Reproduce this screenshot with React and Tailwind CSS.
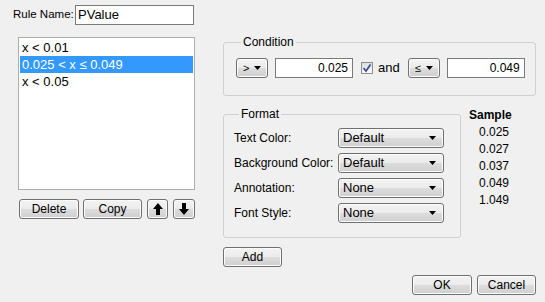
const base =
  'flex items-center h-[20px] border border-[#707070] rounded-[3px] bg-[linear-gradient(#f3f3f3_0%,#ebebeb_50%,#dddddd_50%,#cfcfcf_100%)] text-[12px] text-black shadow-[inset_0_0_0_1px_#fcfcfc] shrink-0'
const btn = `${base} justify-center`

const Caret = () => (
  <svg width="7" height="4" viewBox="0 0 7 4">
    <path d="M0 0 H7 L3.5 4 Z" fill="#000" />
  </svg>
)

const Arrow = ({ down }) => (
  <svg width="10" height="12" viewBox="0 0 10 12" style={down ? { transform: 'rotate(180deg)' } : undefined}>
    <path d="M5 0 L10 6 H7 V12 H3 V6 H0 Z" fill="#000" />
  </svg>
)

const Select = ({ value }) => (
  <div className={`${base} w-[106px] justify-between pl-[4px] pr-[7px]`}>
    <span className="text-[13px]">{value}</span>
    <Caret />
  </div>
)

const Mini = ({ value }) => (
  <div className={`${base} w-[32px] h-[17px] justify-between pl-[6px] pr-[6px]`}>
    <span className="text-[11px] leading-none">{value}</span>
    <Caret />
  </div>
)

const NumInput = ({ value }) => (
  <div className="w-[78px] h-[20px] bg-white border border-[#7a7a7a] flex items-center justify-end pr-[4px] text-[12px]">
    {value}
  </div>
)

export default function App() {
  const rules = ['x < 0.01', '0.025 < x ≤ 0.049', 'x < 0.05']
  const fmt = [
    ['Text Color:', 'Default'],
    ['Background Color:', 'Default'],
    ['Annotation:', 'None'],
    ['Font Style:', 'None'],
  ]

  return (
    <div
      className="w-[545px] h-[302px] bg-[#f0f0f0] flex text-[12px] text-black overflow-hidden"
      style={{ fontFamily: '"Liberation Sans", Arial, sans-serif' }}
    >
      {/* left column */}
      <div className="w-[223px] shrink-0 pl-[13px] pt-[5px] flex flex-col">
        <div className="flex items-center h-[20px]">
          <span className="w-[62px] shrink-0 whitespace-nowrap text-[11.5px]">Rule Name:</span>
          <div className="w-[119px] h-[20px] bg-white border border-[#7a7a7a] flex items-center pl-[2px] text-[13px]">
            PValue
          </div>
        </div>

        <div className="mt-[12px] ml-[5px] w-[177px] h-[153px] bg-white border border-[#abadb3] p-[1px]">
          {rules.map((r, i) => (
            <div
              key={i}
              className={`h-[17px] flex items-center pl-[2px] text-[13px] ${i === 1 ? 'bg-[#3399ff] text-white' : ''}`}
            >
              {r}
            </div>
          ))}
        </div>

        <div className="mt-[9px] ml-[6px] flex">
          <div className={`${btn} w-[60px]`}>Delete</div>
          <div className={`${btn} w-[59px] ml-[4px]`}>Copy</div>
          <div className={`${btn} w-[21px] ml-[5px]`}><Arrow /></div>
          <div className={`${btn} w-[22px] ml-[5px]`}><Arrow down /></div>
        </div>
      </div>

      {/* right column */}
      <div className="w-[313px] shrink-0 pt-[35px] flex flex-col">
        <fieldset className="h-[61px] border border-[#d0d0d0] rounded-[3px] pl-[12px]">
          <legend className="ml-[5px] px-[2px] leading-[14px] text-[12px]">Condition</legend>
          <div className="mt-[9px] flex items-center h-[20px]">
            <Mini value=">" />
            <div className="ml-[7px]"><NumInput value="0.025" /></div>
            <div className="ml-[8px] w-[12px] h-[12px] border border-[#8e8f8f] bg-[linear-gradient(#dcdcdc,#fafafa)] flex items-center justify-center">
              <svg width="10" height="10" viewBox="0 0 10 10">
                <path d="M1.5 5 L4 8 L8.5 1.5" fill="none" stroke="#3b4f8f" strokeWidth="1.7" />
              </svg>
            </div>
            <span className="ml-[5px] text-[13px]">and</span>
            <div className="ml-[8px]"><Mini value="≤" /></div>
            <div className="ml-[7px]"><NumInput value="0.049" /></div>
          </div>
        </fieldset>

        <div className="mt-[11px] flex">
          <fieldset className="w-[238px] h-[131px] border border-[#d0d0d0] rounded-[3px] pl-[10px]">
            <legend className="ml-[5px] px-[2px] leading-[14px] text-[12px]">Format</legend>
            <div className="mt-[7px] flex flex-col gap-[5px]">
              {fmt.map(([l, v]) => (
                <div key={l} className="flex items-center h-[20px]">
                  <span className="w-[104px] shrink-0 whitespace-nowrap">{l}</span>
                  <Select value={v} />
                </div>
              ))}
            </div>
          </fieldset>

          <div className="ml-[8px] w-[40px] flex flex-col text-right">
            <div className="h-[17px] leading-[17px] font-bold">Sample</div>
            {['0.025', '0.027', '0.037', '0.049', '1.049'].map((s, i) => (
              <div key={i} className="leading-[17px]">{s}</div>
            ))}
          </div>
        </div>

        <div className={`${btn} w-[59px] mt-[9px]`}>Add</div>

        <div className="mt-[8px] flex justify-end">
          <div className={`${btn} w-[60px]`}>OK</div>
          <div className={`${btn} w-[59px] ml-[5px]`}>Cancel</div>
        </div>
      </div>
    </div>
  )
}
